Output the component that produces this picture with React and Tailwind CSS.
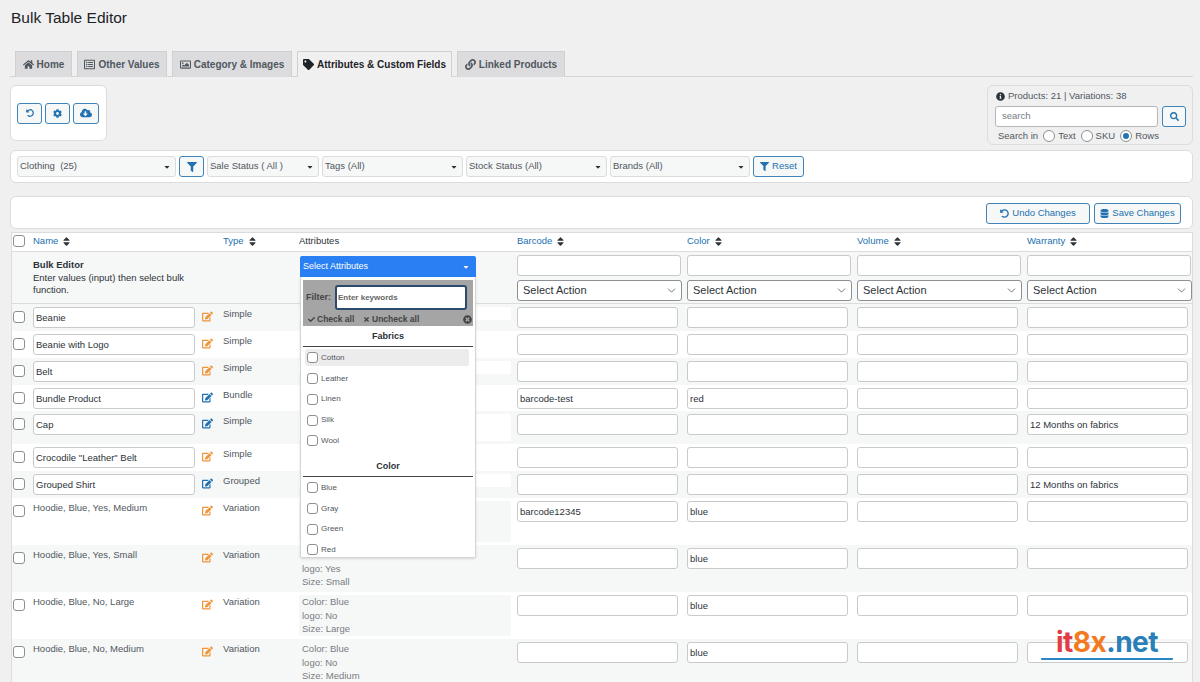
import {
  FaHome, FaRegListAlt, FaRegImage, FaTag, FaLink, FaUndoAlt, FaCog, FaCloudDownloadAlt, FaFilter,
  FaInfoCircle, FaSearch, FaDatabase, FaSort, FaEdit, FaCheck, FaTimes, FaTimesCircle, FaCaretDown,
} from 'react-icons/fa';
import { ChevronDown } from 'lucide-react';

const COLS = 'grid grid-cols-[21px_168px_22px_76px_218px_170px_170px_170px_166px]';

// attribute lines hidden under the open dropdown are left blank
const rows = [
  { name: 'Beanie', type: 'Simple', h: 'h-[27px]' },
  { name: 'Beanie with Logo', type: 'Simple', h: 'h-[27px]' },
  { name: 'Belt', type: 'Simple', h: 'h-[27px]' },
  { name: 'Bundle Product', type: 'Bundle', h: 'h-[26px]', blue: true, barcode: 'barcode-test', color: 'red' },
  { name: 'Cap', type: 'Simple', h: 'h-[33px]', blue: true, warranty: '12 Months on fabrics', tall: true },
  { name: 'Crocodile "Leather" Belt', type: 'Simple', h: 'h-[27px]' },
  { name: 'Grouped Shirt', type: 'Grouped', h: 'h-[27px]', blue: true, warranty: '12 Months on fabrics' },
  { name: 'Hoodie, Blue, Yes, Medium', type: 'Variation', h: 'h-[47px]', variation: true, barcode: 'barcode12345', color: 'blue', attrs: ['', '', ''] },
  { name: 'Hoodie, Blue, Yes, Small', type: 'Variation', h: 'h-[47px]', variation: true, color: 'blue', attrs: ['', 'logo: Yes', 'Size: Small'] },
  { name: 'Hoodie, Blue, No, Large', type: 'Variation', h: 'h-[47px]', variation: true, color: 'blue', attrs: ['Color: Blue', 'logo: No', 'Size: Large'] },
  { name: 'Hoodie, Blue, No, Medium', type: 'Variation', h: 'h-[47px]', variation: true, color: 'blue', attrs: ['Color: Blue', 'logo: No', 'Size: Medium'] },
];

const tabs = [
  { label: 'Home', Icon: FaHome, w: 'w-[57px]' },
  { label: 'Other Values', Icon: FaRegListAlt, w: 'w-[90px]' },
  { label: 'Category & Images', Icon: FaRegImage, w: 'w-[120px]' },
  { label: 'Attributes & Custom Fields', Icon: FaTag, w: 'w-[155px]', active: true },
  { label: 'Linked Products', Icon: FaLink, w: 'w-[108px]' },
];

const Check = ({ className = '' }) => (
  <input type="checkbox" className={`m-0 block h-[12px] w-[12px] appearance-none rounded-[3px] border border-[#8c8f94] bg-white ${className}`} />
);

const Radio = ({ label, on }) => (
  <span className="flex items-center gap-[3px]">
    <span className="flex h-[12px] w-[12px] items-center justify-center rounded-full border border-[#8c8f94] bg-white">
      {on && <span className="h-[6px] w-[6px] rounded-full bg-[#2271b1]" />}
    </span>
    {label}
  </span>
);

const Btn = ({ children, className = '' }) => (
  <button type="button" className={`flex h-[21px] items-center justify-center gap-[3px] rounded-[3px] border border-[#3f83b8] bg-[#f6f7f7] text-[#2271b1] ${className}`}>
    {children}
  </button>
);

const FilterSelect = ({ label, w }) => (
  <div className={`flex h-[21px] items-center justify-between rounded-[3px] border border-[#dcdcde] bg-[#f6f7f7] pl-[2px] pr-[4px] text-[#50575e] ${w}`}>
    <span className="whitespace-pre">{label}</span>
    <FaCaretDown size={8} className="text-[#2c3338]" />
  </div>
);

const TextBox = ({ value, w = 'w-[161px]' }) => (
  <input
    type="text"
    defaultValue={value}
    className={`block h-[21px] rounded-[3px] border border-[#c9cacc] bg-white px-[2px] text-[9.5px] text-[#2c3338] outline-none ${w}`}
  />
);

const ActionSelect = () => (
  <div className="flex h-[21px] w-[165px] items-center justify-between rounded-[3px] border border-[#8c8f94] bg-white pl-[5px] pr-[3px] text-[11px] text-[#2c3338]">
    Select Action
    <ChevronDown size={13} strokeWidth={1.5} className="text-[#50575e]" />
  </div>
);

const SortHead = ({ children }) => (
  <span className="flex items-center gap-[3px] text-[#2271b1]">
    {children}
    <FaSort size={11} className="text-[#2c3338]" />
  </span>
);

const Option = ({ label, hover }) => (
  <div className={`flex h-[17px] items-center gap-[3px] rounded-[2px] pl-[2px] text-[8px] text-[#50575e] ${hover ? 'bg-[#ececec]' : ''}`}>
    <span className="h-[11px] w-[11px] rounded-[3px] border border-[#8c8f94] bg-white" />
    {label}
  </div>
);

const AttributesDropdown = () => (
  <div className="absolute left-px top-[4px] z-10 w-[176px]">
    <div className="flex h-[21px] items-center justify-between rounded-t-[2px] bg-[#2a7ff3] pl-[3px] pr-[6px] text-[9px] text-white">
      Select Attributes
      <FaCaretDown size={8} />
    </div>
    <div className="h-[281px] rounded-b-[2px] border border-t-0 border-[#d5d5d5] bg-white px-[2px] pt-[3px] shadow-sm">
      <div className="h-[46px] bg-[#a5a5a5] px-[3px] pt-[5px] text-[8.5px] font-bold text-[#444]">
        <div className="flex items-center gap-[4px]">
          <span className="text-[9px]">Filter:</span>
          <div className="flex h-[25px] w-[132px] items-center rounded-[3px] border-2 border-[#2c4a6b] bg-white pl-[1px] text-[8px] text-[#666]">Enter keywords</div>
        </div>
        <div className="mt-[3px] flex items-center pl-[2px]">
          <FaCheck size={7} className="mr-[2px]" />
          <span className="w-[46px]">Check all</span>
          <FaTimes size={7} className="mr-[2px]" />
          <span>Uncheck all</span>
          <FaTimesCircle size={9} className="ml-auto mr-[-2px] text-[#444]" />
        </div>
      </div>
      <div className="mx-auto mt-[5px] h-[16px] border-b border-[#444] text-center text-[9px] font-bold leading-[11px] text-[#2c3338]">Fabrics</div>
      <div className="px-[2px] pt-[2px]">
        <div className="w-[164px]"><Option label="Cotton" hover /></div>
        <div className="mt-[4px] flex flex-col gap-[3.8px]">
          <Option label="Leather" />
          <Option label="Linen" />
          <Option label="Silk" />
          <Option label="Wool" />
        </div>
      </div>
      <div className="mx-auto mt-[12px] h-[16px] border-b border-[#444] text-center text-[9px] font-bold leading-[11px] text-[#2c3338]">Color</div>
      <div className="mt-[2px] flex flex-col gap-[3.7px] px-[2px]">
        <Option label="Blue" />
        <Option label="Gray" />
        <Option label="Green" />
        <Option label="Red" />
      </div>
    </div>
  </div>
);

const Row = ({ row, index }) => {
  const striped = index % 2 === 0;
  const boxH = row.attrs ? 'h-[41px]' : row.tall ? 'h-[27px]' : 'h-[13px]';
  const boxBg = row.attrs ? 'bg-[#f6f7f7]' : 'bg-white';
  return (
    <div className={`${COLS} ${row.h} ${striped ? 'bg-[#f6f7f7]' : 'bg-white'}`}>
      <div className="pl-px pt-[7px]"><Check /></div>
      <div className="pt-[3px]">
        {row.variation
          ? <span className="block pt-[1px] leading-[12px] text-[#50575e]">{row.name}</span>
          : <TextBox value={row.name} w="w-[162px]" />}
      </div>
      <div className="pl-px pt-[7px]">
        <FaEdit size={11} className={row.blue ? 'text-[#2271b1]' : 'text-[#f0953a]'} />
      </div>
      <div className="pt-[4px] leading-[12px] text-[#50575e]">{row.type}</div>
      <div className="pt-[3px]">
        <div className={`w-[212px] rounded-[2px] pl-[3px] leading-[13.5px] text-[#787c82] ${boxH} ${boxBg}`}>
          {row.attrs?.map((a, i) => <div key={i} className="h-[13.5px]">{a}</div>)}
        </div>
      </div>
      <div className="pt-[3px]"><TextBox value={row.barcode} /></div>
      <div className="pt-[3px]"><TextBox value={row.color} /></div>
      <div className="pt-[3px]"><TextBox /></div>
      <div className="pt-[3px]"><TextBox value={row.warranty} /></div>
    </div>
  );
};

export default function App() {
  return (
    <div className="relative h-[682px] overflow-hidden bg-[#f0f0f1] pl-[10px] pr-[7px] font-['Liberation_Sans',Arial,sans-serif] text-[9.5px] text-[#2c3338]">
      <h1 className="flex h-[51px] items-start pl-px pt-[9px] text-[15.5px] font-normal leading-[18px] text-[#1d2327]">Bulk Table Editor</h1>

      <div className="flex h-[26px] gap-[5px] border-b border-[#d5d6d8] pl-[5px]">
        {tabs.map(({ label, Icon, w, active }) => (
          <div
            key={label}
            className={`flex h-[26px] items-center justify-center gap-[3px] border border-b-0 border-[#cfd0d2] pb-px text-[10px] font-bold ${w} ${active ? 'bg-[#f0f0f1] text-[#1d2327]' : 'bg-[#dcdcde] text-[#50575e]'}`}
          >
            <Icon size={11} />
            {label}
          </div>
        ))}
      </div>

      <div className="mt-[8px] flex h-[60px] items-start justify-between">
        <div className="flex h-[56px] w-[97px] items-center gap-[3px] rounded-[6px] border border-[#dcdcde] bg-white pl-[6px]">
          <Btn className="w-[25px]"><FaUndoAlt size={8} /></Btn>
          <Btn className="w-[25px]"><FaCog size={9} /></Btn>
          <Btn className="w-[26px]"><FaCloudDownloadAlt size={12} /></Btn>
        </div>
        <div className="h-[60px] w-[206px] rounded-[6px] border border-[#dcdcde] bg-[#f0f0f1] pl-[7px] pt-[4px] text-[#50575e]">
          <div className="flex h-[13px] items-center gap-[3px] pl-px"><FaInfoCircle size={9} className="text-[#2c3338]" />Products: 21 | Variations: 38</div>
          <div className="mt-[3px] flex gap-[4px]">
            <div className="flex h-[21px] w-[163px] items-center rounded-[3px] border border-[#b5b6b8] bg-white pl-[6px] text-[#787c82]">search</div>
            <Btn className="w-[24px]"><FaSearch size={9} /></Btn>
          </div>
          <div className="mt-[2px] flex items-center gap-[5px] pl-[3px]">
            <span>Search in</span>
            <Radio label="Text" />
            <Radio label="SKU" />
            <Radio label="Rows" on />
          </div>
        </div>
      </div>

      <div className="mt-[5px] flex h-[33px] items-center gap-[3px] rounded-[6px] border border-[#dcdcde] bg-white pl-[6px]">
        <FilterSelect label="Clothing  (25)" w="w-[159px]" />
        <Btn className="w-[25px]"><FaFilter size={10} /></Btn>
        <FilterSelect label="Sale Status ( All )" w="w-[112px]" />
        <FilterSelect label="Tags (All)" w="w-[141px]" />
        <FilterSelect label="Stock Status (All)" w="w-[141px]" />
        <FilterSelect label="Brands (All)" w="w-[140px]" />
        <Btn className="w-[51px]"><FaFilter size={9} />Reset</Btn>
      </div>

      <div className="mt-[13px] flex h-[33px] items-center justify-end gap-[4px] rounded-[6px] border border-[#dcdcde] bg-white pr-[11px] pt-px">
        <Btn className="w-[104px]"><FaUndoAlt size={9} />Undo Changes</Btn>
        <Btn className="w-[87px]"><FaDatabase size={9} />Save Changes</Btn>
      </div>

      <div className="mt-[3px] ml-px border-l border-t border-r border-[#dcdcde] bg-white">
        <div className={`${COLS} h-[19px] items-center border-b border-[#dcdcde] pb-[2px]`}>
          <div className="pl-px"><Check /></div>
          <div className="col-span-2"><SortHead>Name</SortHead></div>
          <div><SortHead>Type</SortHead></div>
          <div className="text-[#2c3338]">Attributes</div>
          <div><SortHead>Barcode</SortHead></div>
          <div><SortHead>Color</SortHead></div>
          <div><SortHead>Volume</SortHead></div>
          <div><SortHead>Warranty</SortHead></div>
        </div>

        <div className={`${COLS} h-[52px] border-b border-[#dcdcde] bg-[#f6f7f7]`}>
          <div />
          <div className="col-span-3 w-[185px] pt-[7px] leading-[12.5px] text-[#2c3338]">
            <div className="font-bold">Bulk Editor</div>
            Enter values (input) then select bulk function.
          </div>
          <div className="relative"><AttributesDropdown /></div>
          {[0, 1, 2, 3].map((n) => (
            <div key={n} className="flex flex-col gap-[4px] pt-[3px]">
              <TextBox w="w-[164px]" />
              <ActionSelect />
            </div>
          ))}
        </div>

        {rows.map((row, i) => <Row key={row.name} row={row} index={i} />)}
      </div>

      <div className="absolute left-[1041px] top-[627px] z-20 w-[132px] rounded-[1px] border-b-2 border-[#2a86c4] pb-px text-center font-['Inter',sans-serif] text-[28px] font-bold leading-[30px] tracking-[-0.5px]">
        <span className="text-[#e23d45]">it</span><span className="text-[#f27b21]">8x</span><span className="text-[#2a7fb8]">.net</span>
      </div>
    </div>
  );
}
